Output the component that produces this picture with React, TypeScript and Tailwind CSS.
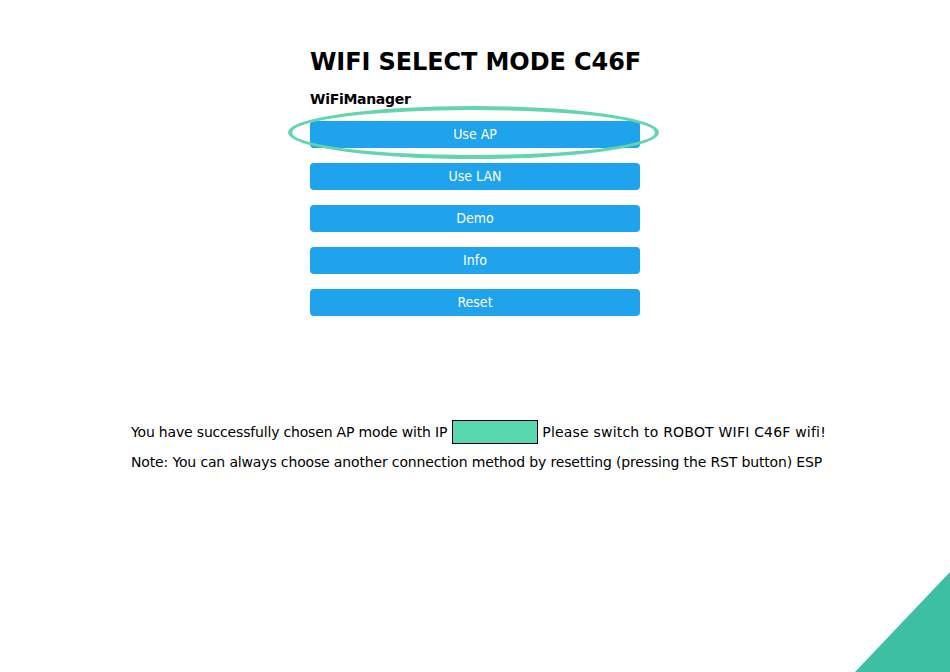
export default function App() {
  const buttons = ['Use AP', 'Use LAN', 'Demo', 'Info', 'Reset']
  return (
    <div className="relative w-[950px] h-[672px] overflow-hidden bg-white font-['DejaVu_Sans',sans-serif] text-black">
      <div className="w-[330px] mx-auto pt-[47px]">
        <h1 className="text-[24px] leading-[30px] font-bold whitespace-nowrap tracking-[-0.1px]">WIFI SELECT MODE C46F</h1>
        <h3 className="mt-[14px] text-[14px] leading-[17px] font-bold tracking-[-0.3px]">WiFiManager</h3>
        <div className="mt-[13px] flex flex-col gap-[15px]">
          {buttons.map((b, i) => (
            <div key={b} className="relative">
              <button className="w-full h-[27px] rounded-[4px] bg-[#1fa3ec] text-white text-[14px] font-['DejaVu_Sans_Condensed','DejaVu_Sans',sans-serif]">
                {b}
              </button>
              {i === 0 && (
                <div className="absolute left-[-22px] right-[-19px] top-[-15px] bottom-[-11px] rounded-[50%] border-[4px] border-[#62d4ae] pointer-events-none" />
              )}
            </div>
          ))}
        </div>
      </div>
      <div className="pl-[131px] pt-[104px] text-[14px] leading-[20px] whitespace-nowrap">
        <p className="flex items-center">
          <span className="tracking-[-0.18px]">You have successfully chosen AP mode with IP</span>
          <span className="inline-block w-[86px] h-[24px] ml-[5px] mr-[4px] bg-[#5ad8b2] border border-black" />
          <span className="tracking-[0.2px]">Please switch to ROBOT WIFI C46F wifi!</span>
        </p>
        <p className="mt-[8px] tracking-[-0.15px]">Note: You can always choose another connection method by resetting (pressing the RST button) ESP</p>
      </div>
      <svg className="absolute right-0 bottom-0" width="95" height="100" viewBox="0 0 95 100">
        <polygon points="95,0 95,100 0,100" fill="#3dbfa3" />
      </svg>
    </div>
  )
}
